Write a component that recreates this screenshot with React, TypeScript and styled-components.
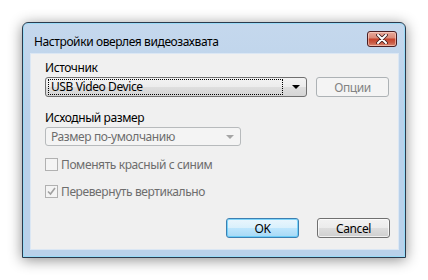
import styled, { createGlobalStyle } from "styled-components";

const GlobalStyle = createGlobalStyle`
  html, body {
    margin: 0;
    padding: 0;
    background: #ffffff;
  }
  body {
    font-family: "Noto Sans", "Liberation Sans", sans-serif;
    font-size: 12px;
    letter-spacing: -0.4px;
    color: #000;
  }
`;

const Page = styled.div`
  width: 428px;
  height: 280px;
  padding: 22px 0 0 22px;
  box-sizing: border-box;
`;

const Window = styled.div`
  width: 384px;
  height: 236px;
  box-sizing: border-box;
  display: flex;
  flex-direction: column;
  padding: 0 6px 7px 7px;
  border: 1px solid #2b3a4d;
  border-radius: 6px 6px 0 0;
  background: linear-gradient(180deg, #c5d8ed 0%, #b9d1ea 40%, #b9d1ea 100%);
  box-shadow: 0 2px 14px rgba(0, 0, 0, 0.45), inset 0 0 0 1px rgba(140, 220, 250, 0.75);
`;

const TitleBar = styled.div`
  height: 30px;
  display: flex;
  align-items: center;
  justify-content: space-between;
  padding: 6px 2px 0 4px;
  box-sizing: border-box;
`;

const Title = styled.span`
  font-size: 12px;
  color: #000;
`;

const CloseButton = styled.div`
  width: 30px;
  height: 16px;
  box-sizing: border-box;
  margin-top: -4px;
  border: 1px solid #4a1e22;
  border-radius: 3px;
  display: flex;
  align-items: center;
  justify-content: center;
  background: linear-gradient(180deg, #e8aa9c 0%, #db8b79 40%, #c7432b 52%, #c95a44 75%, #d98670 100%);
  box-shadow: inset 0 0 0 1px rgba(255, 220, 210, 0.55);
`;

const Client = styled.div`
  flex: 1;
  background: #f0f0f0;
  border: 1px solid #dbe7f4;
  padding: 6px 8px 0 14px;
  display: flex;
  flex-direction: column;
`;

const Label = styled.div<{ $top: number }>`
  line-height: 15px;
  margin-top: ${(p) => p.$top}px;
  margin-bottom: 2px;
  color: #000;
`;

const Row = styled.div`
  display: flex;
  align-items: center;
  gap: 9px;
`;

const Combo = styled.div<{ $disabled?: boolean; $width: number }>`
  width: ${(p) => p.$width}px;
  height: ${(p) => (p.$disabled ? 19 : 20)}px;
  box-sizing: border-box;
  border: 1px solid ${(p) => (p.$disabled ? "#b7babc" : "#707070")};
  border-radius: 3px;
  background: ${(p) =>
    p.$disabled
      ? "#f4f4f4"
      : "linear-gradient(180deg, #f3f3f3 0%, #ececec 50%, #dedede 51%, #d5d5d5 100%)"};
  display: flex;
  align-items: center;
  padding: 0 6px 0 2px;
  color: ${(p) => (p.$disabled ? "#6d6d6d" : "#000")};
`;

const ComboText = styled.div<{ $focused?: boolean }>`
  flex: 1;
  height: 16px;
  box-sizing: border-box;
  line-height: 14px;
  padding-left: 2px;
  margin-right: 9px;
  border: 1px dotted ${(p) => (p.$focused ? "#000" : "transparent")};
`;

const Arrow = styled.div<{ $disabled?: boolean }>`
  width: 0;
  height: 0;
  border-left: 4px solid transparent;
  border-right: 4px solid transparent;
  border-top: 4px solid ${(p) => (p.$disabled ? "#a5a5a5" : "#000")};
`;

const Button = styled.div<{ $variant: "default" | "normal" | "disabled" }>`
  width: 73px;
  height: 20px;
  box-sizing: border-box;
  border-radius: 3px;
  display: flex;
  align-items: center;
  justify-content: center;
  border: 1px solid
    ${(p) =>
      p.$variant === "default" ? "#3c7fb1" : p.$variant === "disabled" ? "#adb2b5" : "#707070"};
  background: ${(p) =>
    p.$variant === "default"
      ? "linear-gradient(180deg, #eaf6fd 0%, #d9f0fc 50%, #bee6fd 51%, #a7d9f5 100%)"
      : p.$variant === "disabled"
      ? "#f4f4f4"
      : "linear-gradient(180deg, #f2f2f2 0%, #ebebeb 50%, #dddddd 51%, #cfcfcf 100%)"};
  box-shadow: ${(p) =>
    p.$variant === "default"
      ? "inset 0 0 0 1px rgba(80, 200, 250, 0.7)"
      : p.$variant === "normal"
      ? "inset 0 0 0 1px rgba(255, 255, 255, 0.7)"
      : "none"};
  color: ${(p) => (p.$variant === "disabled" ? "#838383" : "#000")};
`;

const CheckRow = styled.div<{ $top: number }>`
  display: flex;
  align-items: center;
  gap: 3px;
  height: 15px;
  margin-top: ${(p) => p.$top}px;
  color: #6d6d6d;
`;

const CheckBox = styled.div`
  width: 13px;
  height: 13px;
  box-sizing: border-box;
  border: 1px solid #b1b1b1;
  background: #f4f4f4;
  display: flex;
  align-items: center;
  justify-content: center;
`;

const Buttons = styled.div`
  display: flex;
  justify-content: flex-end;
  gap: 18px;
  margin-top: 19px;
`;

export default function App() {
  return (
    <Page>
      <GlobalStyle />
      <Window>
        <TitleBar>
          <Title>Настройки оверлея видеозахвата</Title>
          <CloseButton>
            <svg width="12" height="10" viewBox="0 0 12 10">
              <path
                d="M2 1 L10 9 M10 1 L2 9"
                stroke="#3a1a1a"
                strokeWidth="3.6"
                strokeLinecap="round"
              />
              <path
                d="M2 1 L10 9 M10 1 L2 9"
                stroke="#ffffff"
                strokeWidth="2"
                strokeLinecap="round"
              />
            </svg>
          </CloseButton>
        </TitleBar>
        <Client>
          <Label $top={0}>Источник</Label>
          <Row>
            <Combo $width={262}>
              <ComboText $focused>USB Video Device</ComboText>
              <Arrow />
            </Combo>
            <Button $variant="disabled">Опции</Button>
          </Row>
          <Label $top={13}>Исходный размер</Label>
          <Combo $width={196} $disabled>
            <ComboText>Размер по-умолчанию</ComboText>
            <Arrow $disabled />
          </Combo>
          <CheckRow $top={11}>
            <CheckBox />
            Поменять красный с синим
          </CheckRow>
          <CheckRow $top={12}>
            <CheckBox>
              <svg width="9" height="9" viewBox="0 0 9 9">
                <path d="M1 4.5 L3.5 7 L8 1" stroke="#a0a0a0" strokeWidth="1.6" fill="none" />
              </svg>
            </CheckBox>
            Перевернуть вертикально
          </CheckRow>
          <Buttons>
            <Button $variant="default">OK</Button>
            <Button $variant="normal">Cancel</Button>
          </Buttons>
        </Client>
      </Window>
    </Page>
  );
}
